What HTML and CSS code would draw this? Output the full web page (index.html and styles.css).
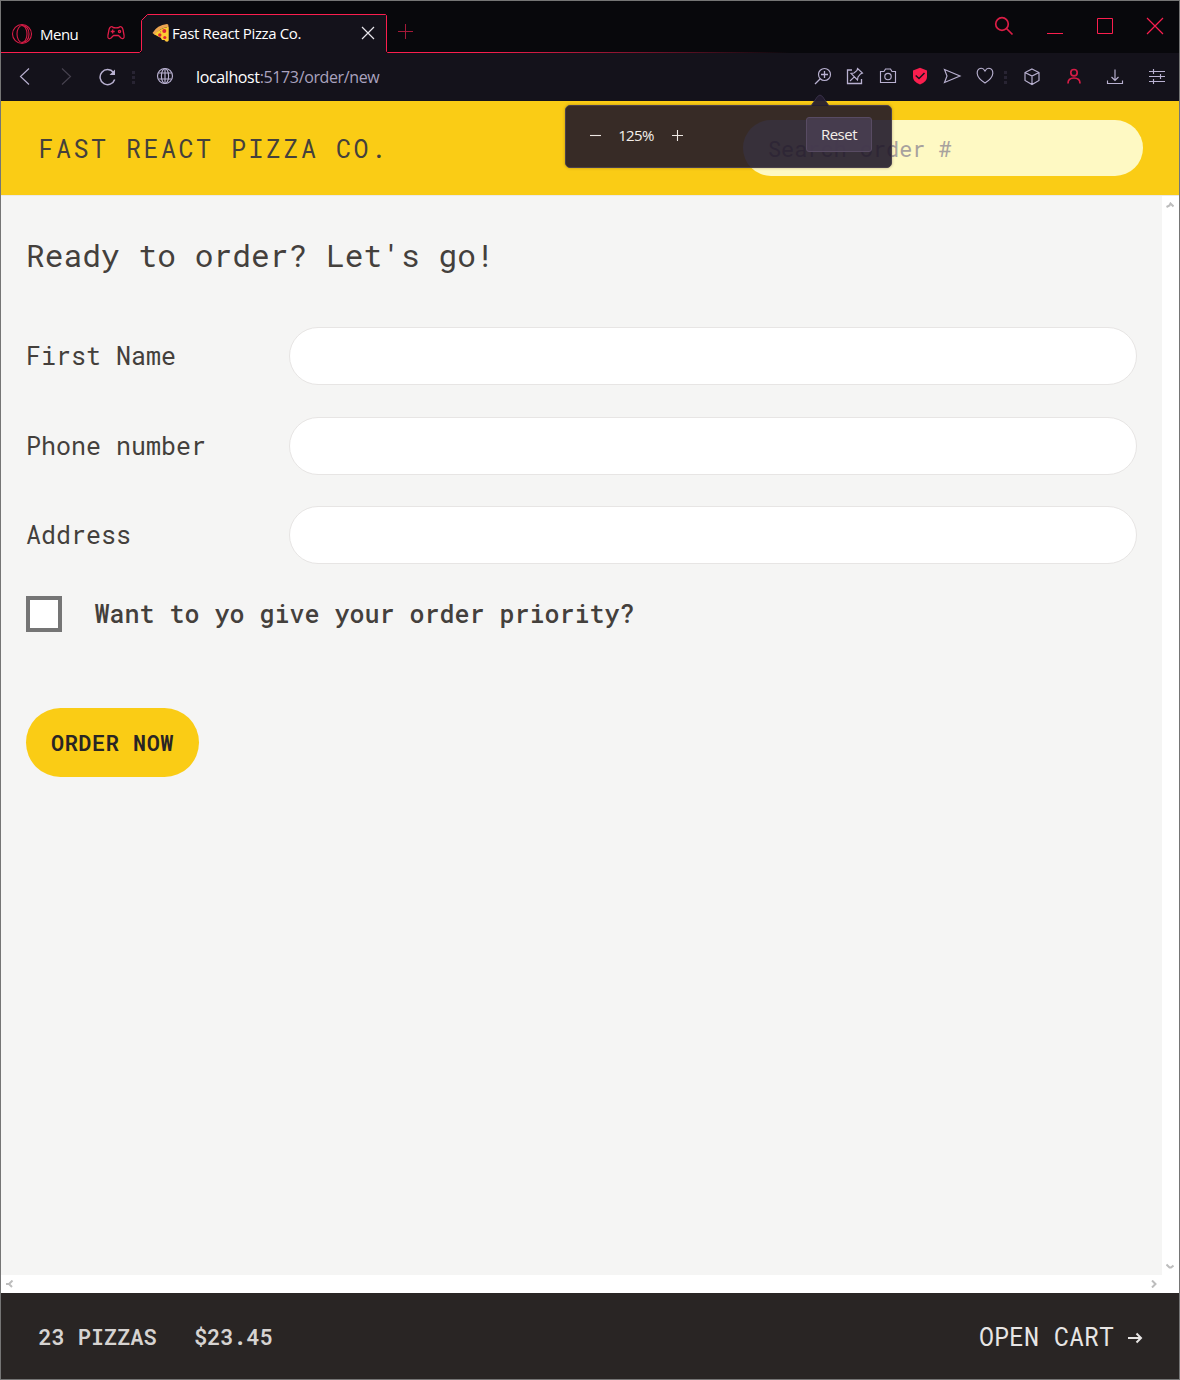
FILE: index.html
```html
<!DOCTYPE html>
<html lang="en">
<head>
<meta charset="utf-8">
<title>Fast React Pizza Co.</title>
<link rel="stylesheet" href="styles.css">
</head>
<body>
<div class="window">
  <div class="tabstrip">
    <svg class="tab-outline" width="1178" height="53" viewBox="1 0 1178 53">
      <defs><linearGradient id="fade" gradientUnits="userSpaceOnUse" x1="480" y1="0" x2="790" y2="0"><stop offset="0" stop-color="#fa1e4e"/><stop offset="1" stop-color="#fa1e4e" stop-opacity="0"/></linearGradient></defs>
      <path d="M141.500 53V20.500L147.500 14.500H385.500L386.500 15.500V53Z" fill="#14121b"/>
      <path d="M1 52.500H139.500L141.500 50.500V20.500L147.500 14.500H385.500L386.500 15.500V51.500L387.500 52.500H790" fill="none" stroke="url(#fade)"/>
    </svg>
    <div class="menu">
      <svg width="22" height="22" viewBox="0 0 22 22" fill="none" stroke="#d81c46" stroke-width="1.1"><circle cx="11" cy="11" r="9.500"/><ellipse cx="11" cy="11" rx="5" ry="8.500"/><path d="M11 2.500C17 3 18 7 18 11S17 19 11 19.500"/></svg>
      <span class="menu-label">Menu</span>
      <svg class="pad" width="20" height="16" viewBox="0 0 20 16" fill="none" stroke="#e01d48" stroke-width="1.300" stroke-linejoin="round"><path d="M4.500 2Q6 1 7 2.500Q10 3.200 13 2.500Q14 1 15.500 2Q17 3 17.500 7.500Q18.500 11 18 12.500Q17 14.500 15 13L12.500 10.500H7.500L5 13Q3 14.500 2 12.500Q1.500 11 2.500 7.500Q3 3 4.500 2Z"/><path d="M6.700 4.500V8.500M4.700 6.500H8.700"/><circle cx="13.500" cy="6.500" r="1.100"/></svg>
    </div>
    <div class="tab">
      <svg width="18" height="20" viewBox="0 0 18 20"><path d="M.500 10Q5 2 15 1Q16.500 1 16.500 3V17Q16.500 19 14.500 18.500L12.500 18L15 16V4Q8 5 3 12Z" fill="#eda451"/><path d="M2.500 11.500Q8 5 16.500 4V17.500Q15 19.500 12.500 17L10 17Q9 14 7 14Z" fill="#fdcb32"/><circle cx="12.300" cy="8" r="2" fill="#df2238"/><circle cx="7.800" cy="12" r="1.700" fill="#df2238"/><circle cx="12.800" cy="14.500" r="1.600" fill="#df2238"/><path d="M8 8.500l1 .800" stroke="#8ca23b"/></svg>
      <span class="tab-title">Fast React Pizza Co.</span>
      <svg class="tab-close" width="14" height="14" viewBox="0 0 14 14" stroke="#e8e6ec" stroke-width="1.200"><path d="M1 1L13 13M13 1L1 13"/></svg>
    </div>
    <svg class="plus" width="15" height="15" viewBox="0 0 15 15" stroke="#a51939"><path d="M0 7.500H15M7.500 0V15"/></svg>
    <div class="controls">
      <svg width="20" height="20" viewBox="0 0 20 20" fill="none" stroke="#db1d46" stroke-width="1.700"><circle cx="8" cy="8" r="6.300"/><path d="M12.500 12.500L18.500 18.500"/></svg>
      <svg width="18" height="18" viewBox="0 0 18 18" fill="none" stroke="#fa1e4e"><path d="M1 16.500H17"/></svg>
      <svg width="18" height="18" viewBox="0 0 18 18" fill="none" stroke="#fa1e4e"><path d="M1.500 1.500H16.500V16.500H1.500Z"/></svg>
      <svg width="18" height="18" viewBox="0 0 18 18" fill="none" stroke="#fa1e4e" stroke-width="1.200"><path d="M1 1L17 17M17 1L1 17"/></svg>
    </div>
  </div>
  <div class="toolbar">
    <div class="nav">
      <svg viewBox="0 0 20 20"><path d="M14 2.500L5.500 10.500L14 18.500"/></svg>
      <svg class="dim" viewBox="0 0 20 20"><path d="M6 2.500L14.500 10.500L6 18.500"/></svg>
      <svg viewBox="0 0 20 20"><path d="M16.500 6.500A7.500 7.500 0 1 0 17.700 13.500" stroke-width="1.500"/><path d="M18 3.500V9H12.500Z" fill="#b9b1d1" stroke="none"/></svg>
    </div>
    <div class="dots"></div>
    <svg class="globe" viewBox="0 0 20 20"><circle cx="10" cy="10" r="7.500"/><ellipse cx="10" cy="10" rx="3.600" ry="7.500"/><path d="M10 2.500V17.500M3.500 7H16.500M3.500 13H16.500"/></svg>
    <div class="url"><b>localhost</b>:5173/order/new</div>
    <div class="tools">
      <svg viewBox="0 0 20 20"><circle cx="11.500" cy="8.500" r="6"/><path d="M7.300 12.700L2 18M11.500 5V12M8 8.500H15" stroke-width="1.300"/></svg>
      <svg viewBox="0 0 20 20"><path d="M7 4H2.500V17.500H16.500V13" stroke-width="1.300"/><path d="M12.500 2.500L17.500 7L15.500 8L13 11L12.500 14L6 7.500L9 7L12 4.500ZM9.300 10.800L5 15"/></svg>
      <svg viewBox="0 0 20 20"><path d="M2.500 5.500H6L7.500 3H12.500L14 5.500H17.500V16.500H2.500Z"/><circle cx="10" cy="10.500" r="3.200"/></svg>
      <svg viewBox="0 0 20 20"><path d="M10 1.700L17 4.500V11Q17 16 10 18.500Q3 16 3 11V4.500Z" fill="#fa1e4e" stroke="none"/><path d="M5.700 9.500L9 12.500L14.500 7" stroke="#14121b" stroke-width="1.500"/></svg>
      <svg viewBox="0 0 20 20"><path d="M2.500 3.500L18 10L2.500 16.500L5 10Z"/></svg>
      <svg viewBox="0 0 20 20"><path d="M10 5Q8 1.500 5 2.500Q2 3.500 2.200 7.500C2.500 11.500 6 14.500 10 17C14 14.500 17.500 11.500 17.800 7.500Q18 3.500 15 2.500Q12 1.500 10 5Z"/></svg>
    </div>
    <div class="dots"></div>
    <div class="tools wide">
      <svg viewBox="0 0 20 20"><path d="M10 3L17 6.500V14.500L10 18.500L3 14.500V6.500ZM3 6.500L10 10L17 6.500M10 10V18.500"/></svg>
      <svg viewBox="0 0 20 20" class="profile"><circle cx="10" cy="6.700" r="3.200"/><path d="M4 17.500Q4 12 10 12T16 17.500"/></svg>
      <svg viewBox="0 0 20 20"><path d="M10 3.500V14.500M6.500 11L10 14.500L13.500 11M2.500 14.500V17.500H17.500V14.500"/></svg>
      <svg viewBox="0 0 20 20"><path d="M2 5.500H18M2 10.500H18M2 15.500H18M6.500 3V8M13.500 8V13M6.500 13V18"/></svg>
    </div>
  </div>

  <header class="header">
    <div class="brand">FAST REACT PIZZA CO.</div>
    <input class="search" placeholder="Search order #">
  </header>

  <div class="viewport">
    <main class="page">
      <h2 class="title">Ready to order? Let's go!</h2>
      <form class="form">
        <label class="field"><span class="field-name">First Name</span><input class="input"></label>
        <label class="field"><span class="field-name">Phone number</span><input class="input"></label>
        <label class="field"><span class="field-name">Address</span><input class="input"></label>
        <label class="priority"><span class="checkbox"></span><span>Want to yo give your order priority?</span></label>
        <button class="order" type="button">ORDER NOW</button>
      </form>
    </main>
    <div class="scroll-y">
      <svg width="8" height="6" viewBox="0 0 8 6"><path d="M.500 5L3.500 3.500L4.500 1.500L7.500 4.500" /></svg>
      <svg width="8" height="6" viewBox="0 0 8 6"><path d="M.500 1.500L3.500 4.500H5L7.500 2.500"/></svg>
    </div>
    <div class="scroll-x">
      <svg width="8" height="8" viewBox="0 0 8 8"><path d="M6.500 .500L3 4L6 7M0 4H3"/></svg>
      <svg width="6" height="8" viewBox="0 0 6 8"><path d="M1 .500L4.500 4L1 7.500"/></svg>
    </div>
  </div>

  <footer class="cart">
    <div class="totals"><span>23 PIZZAS</span><span>$23.45</span></div>
    <div class="open">OPEN CART <svg width="15" height="12" viewBox="0 0 15 12" fill="none" stroke="#e7e5e4" stroke-width="2"><path d="M0 6H13M8.500 1.500L13 6L8.500 10.500"/></svg></div>
  </footer>

  <div class="zoom">
    <svg class="zoom-tip" width="20" height="12" viewBox="0 0 20 12"><path d="M1 12L7.500 2.500Q10 -.500 12.500 2.500L19 12Z" fill="#241d30" fill-opacity=".95"/><path d="M1 12L7.500 2.500Q10 -.500 12.500 2.500L19 12" fill="none" stroke="#383048"/></svg>
    <svg width="11" height="11" viewBox="0 0 11 11" stroke="#eee9e4" stroke-width="1.100"><path d="M0 5.500H11"/></svg>
    <span class="level">125%</span>
    <svg width="11" height="11" viewBox="0 0 11 11" stroke="#eee9e4" stroke-width="1.100"><path d="M0 5.500H11M5.500 0V11"/></svg>
    <span class="reset">Reset</span>
  </div>
</div>
</body>
</html>
```
FILE: styles.css
```css
* { box-sizing: border-box; }
body {
  margin: 0;
  font-family: "Roboto Mono", "DejaVu Sans Mono", monospace;
  font-size: 25px;
  color: #44403c;
}
svg { flex: none; display: block; }
.window {
  position: relative;
  width: 1180px;
  height: 1380px;
  border: 1px solid #757575;
  display: flex;
  flex-direction: column;
  overflow: hidden;
}

/* Browser chrome */
.tabstrip, .toolbar, .zoom { font-family: "Segoe UI", "Open Sans", sans-serif; }
.tabstrip {
  position: relative;
  height: 52px;
  flex: none;
  background: #08080c;
  display: flex;
  color: #fff;
  font-size: 15px;
}
.tab-outline { position: absolute; left: 0; top: -1px; }
.menu {
  width: 140px;
  padding: 14px 0 0 10px;
  display: flex;
  align-items: center;
}
.menu-label { margin-left: 7px; width: 66px; letter-spacing: -0.5px; }
.menu .pad { margin-bottom: 2px; }
.tab {
  position: relative;
  width: 246px;
  padding: 12px 12px 0 11px;
  display: flex;
  align-items: center;
}
.tab-title { margin-left: 2px; letter-spacing: -0.37px; white-space: nowrap; }
.tab-close { margin-left: auto; }
.plus { margin: 23px 0 0 11px; }
.controls {
  margin: 15px 15px 0 auto;
  width: 170px;
  display: flex;
  justify-content: space-between;
  height: 20px;
  align-items: center;
}
.toolbar {
  height: 48px;
  flex: none;
  background: #14121b;
  display: flex;
  align-items: center;
  font-size: 16px;
  color: #aaa2bf;
}
.toolbar svg { width: 20px; height: 20px; fill: none; stroke: #b9b1d1; stroke-width: 1.15; margin-bottom: 2px; }
.nav { display: flex; gap: 21px; padding-left: 14px; width: 129px; }
.toolbar .dim { stroke: #47424f; }
.dots {
  width: 3px;
  height: 13px;
  margin-left: 2px;
  background: repeating-linear-gradient(#282433 0 3px, transparent 3px 5px);
}
.globe { margin-left: 20px; }
.url { margin-left: 21px; letter-spacing: -0.37px; }
.url b { color: #fff; font-weight: 400; }
.tools { display: flex; gap: 12.4px; margin-left: auto; }
.toolbar > .tools + .dots { margin-left: 9px; }
.toolbar > .wide { gap: 21.4px; margin: 0 12.5px 0 15.5px; }
.toolbar .profile { stroke: #d51c46; stroke-width: 1.7; }

/* Application */
.header {
  height: 94px;
  flex: none;
  padding: 0 36px 0 37.5px;
  background: #facc15;
  display: flex;
  align-items: center;
  justify-content: space-between;
}
.brand { letter-spacing: 2.5px; padding-top: 1px; }
.search {
  width: 400px;
  height: 56px;
  border: 0;
  border-radius: 28px;
  padding: 0 25px;
  background: #fef9c3;
  font: 21.875px "Roboto Mono", "DejaVu Sans Mono", monospace;
}
.search::placeholder { color: #a8a29e; opacity: 1; }
.viewport {
  flex: 1;
  display: grid;
  grid-template: 1fr 18px / 1fr 17px;
  background: #fff;
  border-top: 1px solid #ebe9e6;
}
.page { background: #f5f5f4; padding: 36px 25px; }
.title {
  margin: 0 0 50px;
  font-size: 31.25px;
  line-height: 45px;
  font-weight: 400;
}
.form { display: flex; flex-direction: column; align-items: stretch; }
.field {
  display: grid;
  grid-template-columns: 263px 1fr;
  align-items: center;
  height: 58px;
  margin-bottom: 31.5px;
}
.field-name { padding-bottom: 1px; }
.input {
  width: 100%;
  height: 58px;
  border: 1px solid #e7e5e4;
  border-radius: 29px;
  background: #fff;
  padding: 0 25px;
}
.priority { display: flex; align-items: center; gap: 32.5px; height: 36px; font-weight: 500; }
.checkbox { width: 36px; height: 36px; border: 4px solid #757575; background: #fff; }
.order {
  align-self: flex-start;
  margin-top: 76px;
  width: 173px;
  height: 69px;
  padding: 0;
  border: 0;
  border-radius: 34.5px;
  background: #facc15;
  color: #292524;
  font: 600 21.875px "Roboto Mono", "DejaVu Sans Mono", monospace;
  letter-spacing: 0.55px;
}
.scroll-y, .scroll-x { display: flex; justify-content: space-between; align-items: center; }
.scroll-y { flex-direction: column; padding: 6px 1px 6px 0; }
.scroll-x { padding: 0 5px 0 5px; }
.scroll-y svg, .scroll-x svg { fill: none; stroke: #bdbdbd; stroke-width: 2; }
.cart {
  height: 86px;
  flex: none;
  background: #292524;
  color: #e7e5e4;
  padding: 0 36px 0 37.5px;
  display: flex;
  align-items: center;
  justify-content: space-between;
}
.totals { display: flex; gap: 37.5px; font-size: 21.875px; font-weight: 600; color: #d6d3d1; padding-top: 1px; }
.open { display: flex; align-items: center; gap: 14px; padding-top: 1px; }
.open svg { margin-top: 3px; }

/* Page-zoom bubble hanging from the toolbar */
.zoom {
  position: absolute;
  left: 564px;
  top: 104px;
  width: 327px;
  height: 63px;
  border: 1.5px solid #49404c;
  border-radius: 5px;
  background: rgba(30, 23, 40, .89);
  box-shadow: 0 0 3px rgba(60, 40, 20, .35);
  display: flex;
  align-items: center;
  padding: 0 19px 3px 24px;
  color: #f4efea;
  font-size: 15px;
}
.zoom-tip { position: absolute; left: 244px; top: -12px; }
.level { width: 38px; margin: 0 17px 0 16px; letter-spacing: -0.6px; text-align: center; }
.reset {
  width: 66px;
  height: 35px;
  margin: 0 0 1px auto;
  border: 1px solid #584b63;
  border-radius: 3px;
  background: rgba(73, 62, 82, .85);
  line-height: 32px;
  text-align: center;
  letter-spacing: -0.5px;
}
```
